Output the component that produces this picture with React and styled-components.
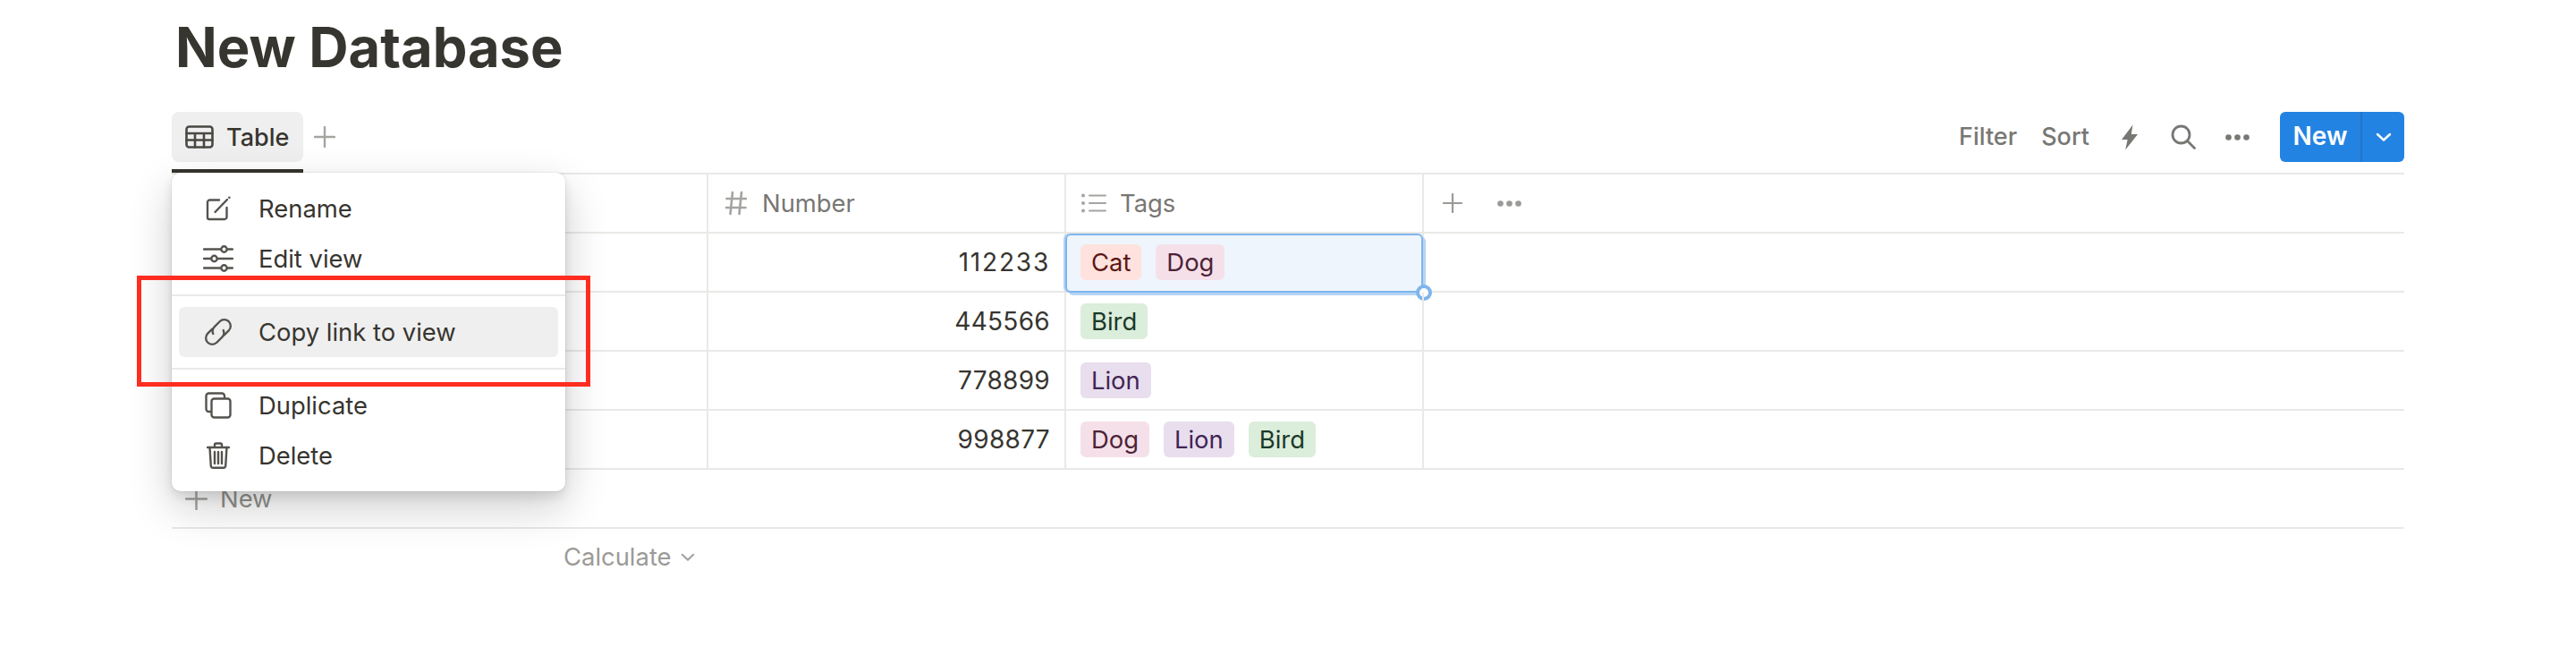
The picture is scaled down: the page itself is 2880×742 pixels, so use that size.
import React from "react";
import styled, { createGlobalStyle } from "styled-components";

const GlobalStyle = createGlobalStyle`
  html, body {
    margin: 0;
    padding: 0;
    background: #fff;
  }
  body {
    font-family: Inter, "Liberation Sans", sans-serif;
    color: #37352f;
    font-size: 27.4px;
  }
  * {
    box-sizing: border-box;
  }
`;

const line = "#e9e9e7";
const gray = "#787774";

const Page = styled.div`
  height: 742px;
  padding: 0 192px;
  overflow: hidden;
`;

const Title = styled.h1`
  margin: 0 0 19px;
  padding-left: 4px;
  height: 106px;
  line-height: 106px;
  font-size: 61.4px;
  font-weight: 700;
  color: #37352f;
`;

const Board = styled.div`
  position: relative;
`;

const Toolbar = styled.div`
  display: flex;
  justify-content: space-between;
  height: 68px;
`;

const Tabs = styled.div`
  display: flex;
  align-items: flex-start;
`;

const TabWrap = styled.div`
  height: 68px;
  border-bottom: 4px solid #37352f;
`;

const Tab = styled.div`
  display: flex;
  align-items: center;
  gap: 14px;
  width: 147px;
  height: 56px;
  padding-left: 15px;
  border-radius: 8px;
  background: #efefef;
  font-weight: 500;
  font-size: 27px;
`;

const AddView = styled.div`
  display: flex;
  align-items: center;
  justify-content: center;
  width: 48px;
  height: 56px;
`;

const Actions = styled.div`
  display: flex;
  align-items: flex-start;
`;

const ActionText = styled.span`
  display: block;
  margin-right: ${(p) => p.$gap}px;
  line-height: 56px;
  color: ${gray};
  font-weight: 500;
  font-size: 27px;
`;

const ActionIcon = styled.span`
  display: flex;
  align-items: center;
  justify-content: center;
  height: 56px;
  width: ${(p) => p.$w}px;
  margin-right: ${(p) => p.$gap}px;
`;

const NewButton = styled.div`
  display: flex;
  width: 139px;
  height: 56px;
  border-radius: 6px;
  background: #2383e2;
  color: #fff;
  font-weight: 600;
  font-size: 28px;
  overflow: hidden;
`;

const NewLabel = styled.div`
  width: 92px;
  line-height: 54px;
  text-align: center;
  border-right: 2px solid rgba(15, 15, 15, 0.12);
`;

const NewArrow = styled.div`
  flex: 1;
  display: flex;
  align-items: center;
  justify-content: center;
`;

const Row = styled.div`
  display: grid;
  grid-template-columns: 600px 400px 400px 1fr;
  height: ${(p) => (p.$head ? 68 : 66)}px;
  border-top: ${(p) => (p.$head ? `2px solid ${line}` : "none")};
  border-bottom: 2px solid ${line};
`;

const Cell = styled.div`
  position: relative;
  display: flex;
  align-items: center;
  gap: 16px;
  padding: 0 16px;
  border-right: ${(p) => (p.$plain ? "none" : `2px solid ${line}`)};
  background: ${(p) => (p.$selected ? "#eef5fd" : "transparent")};
`;

const NumberCell = styled(Cell)`
  justify-content: flex-end;
  font-size: 28px;
  letter-spacing: ${(p) => p.$spacing}px;
`;

const HeadCell = styled(Cell)`
  color: ${gray};
  gap: ${(p) => p.$gap || 16}px;
  padding-left: ${(p) => p.$pad || 18}px;
`;

const FocusRing = styled.div`
  position: absolute;
  left: -1px;
  top: 0;
  right: -1px;
  bottom: -2px;
  border: 2.5px solid #7fb5ec;
  border-radius: 6px;
  box-shadow: 3px 3px 0 0 #b5d4f4, -2px 0 0 0 #b5d4f4;
`;

const Handle = styled.div`
  position: absolute;
  right: -11.5px;
  bottom: -10.5px;
  width: 18px;
  height: 18px;
  border-radius: 50%;
  background: #fff;
  border: 4px solid #7fb5ec;
`;

const tagColors = {
  Cat: ["#ffe2dd", "#5d1715"],
  Dog: ["#f5e0e9", "#4c2337"],
  Bird: ["#dbeddb", "#1c3829"],
  Lion: ["#e8deee", "#412454"],
};

const Tag = styled.span`
  display: block;
  height: 40px;
  line-height: 40px;
  padding: 0 12px;
  border-radius: 6px;
  background: ${(p) => tagColors[p.$name][0]};
  color: ${(p) => tagColors[p.$name][1]};
`;

const NewRow = styled.div`
  display: flex;
  align-items: center;
  gap: 14px;
  height: 66px;
  padding-left: 15px;
  border-bottom: 2px solid ${line};
  color: #91908c;
`;

const CalcRow = styled.div`
  display: flex;
  align-items: center;
  gap: 10px;
  height: 62px;
  padding-left: 438px;
  color: #9b9a97;
`;

const Menu = styled.div`
  position: absolute;
  left: 0;
  top: 68px;
  width: 440px;
  height: 356px;
  padding: 12px 0 11px;
  background: #fff;
  border-radius: 10px;
  box-shadow: rgba(15, 15, 15, 0.05) 0 0 0 1px, rgba(15, 15, 15, 0.1) 0 6px 12px,
    rgba(15, 15, 15, 0.2) 0 18px 48px;
  z-index: 2;
`;

const MenuSection = styled.div`
  padding: ${(p) => (p.$boxed ? "12px 0" : "0")};
  border-top: ${(p) => (p.$boxed ? `2px solid ${line}` : "none")};
  border-bottom: ${(p) => (p.$boxed ? `2px solid ${line}` : "none")};
  margin: ${(p) => (p.$boxed ? "12px 0" : "0")};
`;

const MenuItem = styled.div`
  display: flex;
  align-items: center;
  height: 56px;
  margin: 0 8px;
  border-radius: 6px;
  background: ${(p) => (p.$active ? "#efefef" : "transparent")};
`;

const MenuIcon = styled.span`
  display: flex;
  align-items: center;
  justify-content: center;
  width: 89px;
  padding-right: 1px;
  flex: none;
`;

const Callout = styled.div`
  position: absolute;
  left: -39px;
  top: 183px;
  width: 507px;
  height: 124px;
  border: 5px solid #ff2d20;
  z-index: 3;
`;

const Icon = styled.svg`
  display: block;
  flex: none;
  fill: none;
  stroke: ${(p) => p.$color || "#55534e"};
  stroke-width: ${(p) => p.$sw || 2.4}px;
  stroke-linecap: round;
  stroke-linejoin: round;
`;

const PlusIcon = ({ size = 24, color = "#a5a4a1" }) => (
  <Icon width={size} height={size} viewBox="0 0 24 24" $color={color} $sw={2.4}>
    <path d="M12 1v22M1 12h22" />
  </Icon>
);

const TableIcon = () => (
  <Icon width="32" height="26" viewBox="0 0 32 26" $color="#4a4843" $sw={2.6}>
    <rect x="1.5" y="1.5" width="29" height="23" rx="3" />
    <path d="M1.5 9h29M1.5 16.5h29M11 9v15.5M21 9v15.5" />
  </Icon>
);

const DotsIcon = ({ color = "#787774" }) => (
  <svg width="27" height="7" viewBox="0 0 27 7" fill={color}>
    <circle cx="3.5" cy="3.5" r="3.3" />
    <circle cx="13.5" cy="3.5" r="3.3" />
    <circle cx="23.5" cy="3.5" r="3.3" />
  </svg>
);

const ChevronIcon = ({ color, w = 18, h = 10, sw = 2.4 }) => (
  <Icon width={w} height={h} viewBox="0 0 18 10" $color={color} $sw={sw}>
    <path d="M2 2l7 6.500L16 2" />
  </Icon>
);

const BoltIcon = () => (
  <svg width="18" height="29" viewBox="0 0 18 28" fill="#787774">
    <path d="M12.500 0L0 16.500h6.600L4.200 28 18 10.500h-7.200L12.500 0z" />
  </svg>
);

const SearchIcon = () => (
  <Icon width="28" height="28" viewBox="0 0 28 28" $color="#787774" $sw={2.8}>
    <circle cx="11.500" cy="11.500" r="9.500" />
    <path d="M18.500 18.500L26.500 26.500" />
  </Icon>
);

const HashIcon = () => (
  <Icon width="24" height="28" viewBox="0 0 24 28" $color="#a5a4a1" $sw={2.6}>
    <path d="M8 2L5.500 26M18 2l-2.500 24M1.500 9h22M.5 19h22" />
  </Icon>
);

const ListIcon = () => (
  <svg width="28" height="22" viewBox="0 0 28 22" fill="#a5a4a1">
    <circle cx="2" cy="2.500" r="2" />
    <circle cx="2" cy="11" r="2" />
    <circle cx="2" cy="19.500" r="2" />
    <rect x="8" y="1.500" width="20" height="2" rx="1" />
    <rect x="8" y="10" width="20" height="2" rx="1" />
    <rect x="8" y="18.500" width="20" height="2" rx="1" />
  </svg>
);

const RenameIcon = () => (
  <Icon width="28" height="28" viewBox="0 0 28 28">
    <path d="M15 4.500H4.500a2.500 2.500 0 0 0-2.500 2.500V24a2 2 0 0 0 2 2h17a2.500 2.500 0 0 0 2.500-2.500V13" />
    <path d="M10.500 18L24 4" />
    <path d="M26.300 1.700l.1.1" />
  </Icon>
);

const SlidersIcon = () => (
  <Icon width="34" height="30" viewBox="0 0 34 30">
    <path d="M1 4.500h19M27 4.500h6M1 15h8M16 15h17M1 25.500h19M27 25.500h6" />
    <circle cx="23.500" cy="4.500" r="3.200" />
    <circle cx="12.500" cy="15" r="3.200" />
    <circle cx="23.500" cy="25.500" r="3.200" />
  </Icon>
);

const LinkIcon = () => (
  <Icon width="38" height="38" viewBox="0 0 32 32" $sw={2}>
    <g transform="rotate(-45 16 16)">
      <path d="M14 10H8a6 6 0 0 0 0 12h7a6 6 0 0 0 5.600-3.800" />
      <path d="M18 22h6a6 6 0 0 0 0-12h-7a6 6 0 0 0-5.600 3.800" />
    </g>
  </Icon>
);

const DuplicateIcon = () => (
  <Icon width="30" height="30" viewBox="0 0 30 30">
    <path d="M6.500 22H4.500a3 3 0 0 1-3-3V4.500a3 3 0 0 1 3-3H19a3 3 0 0 1 3 3v2" />
    <rect x="7.500" y="7.500" width="21" height="21" rx="3" />
  </Icon>
);

const TrashIcon = () => (
  <Icon width="26" height="30" viewBox="0 0 26 30">
    <path d="M1 6h24M9 6V3a1.500 1.500 0 0 1 1.500-1.500h5A1.500 1.500 0 0 1 17 3v3" />
    <path d="M3.500 6l1.300 20.500a2.500 2.500 0 0 0 2.500 2.300h11.400a2.500 2.500 0 0 0 2.500-2.300L22.500 6" />
    <path d="M9 11v13M13 11v13M17 11v13" />
  </Icon>
);

const ColumnSpacer = styled.span`
  width: 15px;
`;

const rows = [
  { number: "112233", spacing: 1.8, tags: ["Cat", "Dog"], selected: true },
  { number: "445566", spacing: 0.3, tags: ["Bird"] },
  { number: "778899", spacing: 0.3, tags: ["Lion"] },
  { number: "998877", spacing: 0.3, tags: ["Dog", "Lion", "Bird"] },
];

export default function App() {
  return (
    <Page>
      <GlobalStyle />
      <Title>New Database</Title>
      <Board>
        <Toolbar>
          <Tabs>
            <TabWrap>
              <Tab>
                <TableIcon />
                Table
              </Tab>
            </TabWrap>
            <AddView>
              <PlusIcon />
            </AddView>
          </Tabs>
          <Actions>
            <ActionText $gap={27}>Filter</ActionText>
            <ActionText $gap={36}>Sort</ActionText>
            <ActionIcon $w={18} $gap={37}>
              <BoltIcon />
            </ActionIcon>
            <ActionIcon $w={28} $gap={33}>
              <SearchIcon />
            </ActionIcon>
            <ActionIcon $w={27} $gap={34}>
              <DotsIcon />
            </ActionIcon>
            <NewButton>
              <NewLabel>New</NewLabel>
              <NewArrow>
                <ChevronIcon color="#fff" />
              </NewArrow>
            </NewButton>
          </Actions>
        </Toolbar>

        <Row $head>
          <Cell />
          <HeadCell $gap={17} $pad={19}>
            <HashIcon />
            Number
          </HeadCell>
          <HeadCell $gap={15} $pad={17}>
            <ListIcon />
            Tags
          </HeadCell>
          <HeadCell $plain $pad={21} $gap={12}>
            <PlusIcon size={22} color="#9b9a97" />
            <ColumnSpacer />
            <DotsIcon color="#9b9a97" />
          </HeadCell>
        </Row>
        {rows.map((row) => (
          <Row key={row.number}>
            <Cell />
            <NumberCell $spacing={row.spacing}>{row.number}</NumberCell>
            <Cell $selected={row.selected}>
              {row.tags.map((tag) => (
                <Tag key={tag} $name={tag}>
                  {tag}
                </Tag>
              ))}
              {row.selected && (
                <FocusRing>
                  <Handle />
                </FocusRing>
              )}
            </Cell>
            <Cell $plain />
          </Row>
        ))}
        <NewRow>
          <PlusIcon size={25} color="#a5a4a1" />
          New
        </NewRow>
        <CalcRow>
          Calculate
          <ChevronIcon color="#a5a4a1" w={16} h={9} />
        </CalcRow>

        <Menu>
          <MenuItem>
            <MenuIcon>
              <RenameIcon />
            </MenuIcon>
            Rename
          </MenuItem>
          <MenuItem>
            <MenuIcon>
              <SlidersIcon />
            </MenuIcon>
            Edit view
          </MenuItem>
          <MenuSection $boxed>
            <MenuItem $active>
              <MenuIcon>
                <LinkIcon />
              </MenuIcon>
              Copy link to view
            </MenuItem>
          </MenuSection>
          <MenuItem>
            <MenuIcon>
              <DuplicateIcon />
            </MenuIcon>
            Duplicate
          </MenuItem>
          <MenuItem>
            <MenuIcon>
              <TrashIcon />
            </MenuIcon>
            Delete
          </MenuItem>
        </Menu>
        <Callout />
      </Board>
    </Page>
  );
}
